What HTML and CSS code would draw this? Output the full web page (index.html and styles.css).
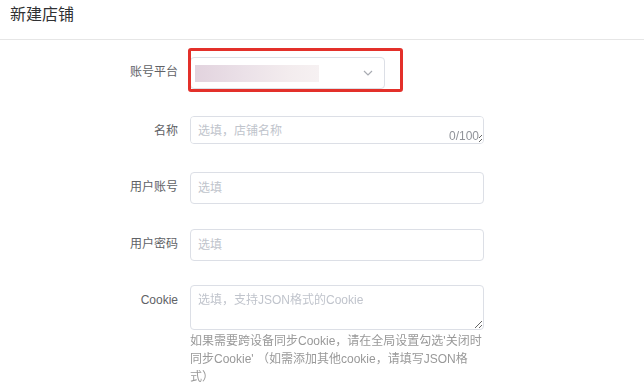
FILE: index.html
```html
<!DOCTYPE html>
<html>
<head>
    <link rel="stylesheet" href="styles.css">
</head>
<body>
    <header class="page-header">
        <span class="title">新建店铺</span>
    </header>

    <form class="shop-form">
        <div class="form-row row-platform">
            <label class="form-label">账号平台</label>
            <div class="form-control">
                <div class="select">
                    <span class="select-value"></span>
                    <svg class="select-arrow" width="10" height="6" viewBox="0 0 10 6">
                        <path d="M1 1l4 4 4-4" fill="none" stroke="#a8abb2" stroke-width="1.2"/>
                    </svg>
                </div>
                <div class="highlight"></div>
            </div>
        </div>

        <div class="form-row row-name">
            <label class="form-label">名称</label>
            <div class="form-control">
                <textarea class="textarea single" rows="1" placeholder="选填，店铺名称"></textarea>
                <span class="count">0/100</span>
            </div>
        </div>

        <div class="form-row">
            <label class="form-label">用户账号</label>
            <div class="form-control">
                <input class="input" type="text" placeholder="选填">
            </div>
        </div>

        <div class="form-row row-password">
            <label class="form-label">用户密码</label>
            <div class="form-control">
                <input class="input" type="text" placeholder="选填">
            </div>
        </div>

        <div class="form-row row-cookie">
            <label class="form-label">Cookie</label>
            <div class="form-control">
                <textarea class="textarea multi" rows="2" placeholder="选填，支持JSON格式的Cookie"></textarea>
                <p class="help">如果需要跨设备同步Cookie，请在全局设置勾选'关闭时同步Cookie' （如需添加其他cookie，请填写JSON格式）</p>
            </div>
        </div>
    </form>
</body>
</html>
```

FILE: styles.css
```css
body {
    margin: 0;
    padding: 0;
    font-family: "Liberation Sans", "Noto Sans CJK SC", sans-serif;
    background-color: white;
    overflow: hidden;
}

.page-header {
    height: 40px;
    padding: 6px 10px 0;
    box-sizing: border-box;
    border-bottom: 1px solid #e6e6e6;
}

.title {
    font-size: 16px;
    line-height: 18px;
    color: #303133;
}

.shop-form {
    padding-top: 17px;
}

.form-row {
    display: flex;
    align-items: flex-start;
    margin-bottom: 25px;
}

.row-platform {
    margin-bottom: 27px;
}

.row-name {
    margin-bottom: 26px;
}

.row-password {
    margin-bottom: 24px;
}

.row-cookie {
    margin-bottom: 0;
}

.form-label {
    width: 190px;
    padding-right: 12px;
    box-sizing: border-box;
    text-align: right;
    font-size: 12px;
    line-height: 30px;
    color: #606266;
}

.form-control {
    position: relative;
    width: 294px;
}

.select {
    width: 195px;
    height: 32px;
    border: 1px solid #dcdfe6;
    border-radius: 4px;
    box-sizing: border-box;
    display: flex;
    align-items: center;
    justify-content: space-between;
    padding: 0 11px 0 4px;
}

.select-value {
    width: 124px;
    height: 17px;
    background: linear-gradient(90deg, #e2d3de 0%, #ebe1e8 40%, #f3ecee 75%, #f6f1f2 100%);
}

.highlight {
    position: absolute;
    left: -2px;
    top: -9px;
    width: 215px;
    height: 44px;
    border: 3px solid #e3302a;
    border-radius: 3px;
    box-sizing: border-box;
}

.input,
.textarea {
    display: block;
    width: 100%;
    box-sizing: border-box;
    border: 1px solid #dcdfe6;
    border-radius: 4px;
    font-family: inherit;
    font-size: 12px;
    color: #606266;
    outline: none;
    margin: 0;
}

.input {
    height: 32px;
    padding: 0 7px;
}

.textarea {
    padding: 5px 7px;
    line-height: 18px;
    resize: vertical;
}

.textarea.single {
    height: 28px;
}

.textarea.multi {
    height: 45px;
}

.input::placeholder,
.textarea::placeholder {
    color: #c0c4cc;
}

.count {
    position: absolute;
    right: 5px;
    bottom: 1px;
    font-size: 12px;
    line-height: 14px;
    color: #909399;
    background: white;
}

.help {
    margin: 2px 0 0;
    font-size: 12px;
    line-height: 18px;
    color: #999;
}
```
